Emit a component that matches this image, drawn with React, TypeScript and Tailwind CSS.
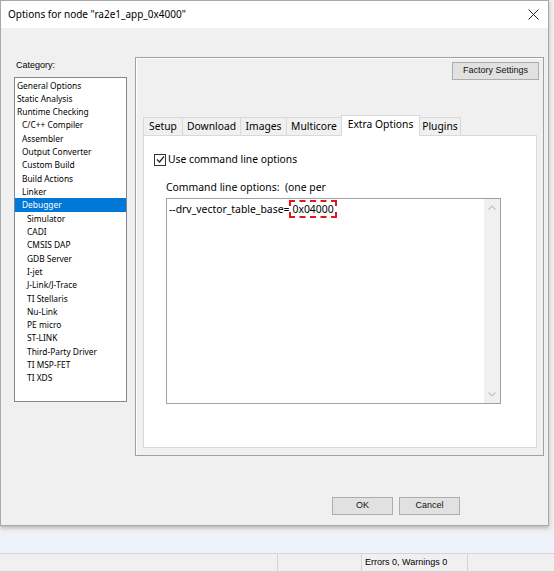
import { useState } from "react";

const categories: { label: string; level: number }[] = [
  { label: "General Options", level: 0 },
  { label: "Static Analysis", level: 0 },
  { label: "Runtime Checking", level: 0 },
  { label: "C/C++ Compiler", level: 1 },
  { label: "Assembler", level: 1 },
  { label: "Output Converter", level: 1 },
  { label: "Custom Build", level: 1 },
  { label: "Build Actions", level: 1 },
  { label: "Linker", level: 1 },
  { label: "Debugger", level: 1 },
  { label: "Simulator", level: 2 },
  { label: "CADI", level: 2 },
  { label: "CMSIS DAP", level: 2 },
  { label: "GDB Server", level: 2 },
  { label: "I-jet", level: 2 },
  { label: "J-Link/J-Trace", level: 2 },
  { label: "TI Stellaris", level: 2 },
  { label: "Nu-Link", level: 2 },
  { label: "PE micro", level: 2 },
  { label: "ST-LINK", level: 2 },
  { label: "Third-Party Driver", level: 2 },
  { label: "TI MSP-FET", level: 2 },
  { label: "TI XDS", level: 2 },
];

const tabs = [
  { label: "Setup", w: "w-[40px]" },
  { label: "Download", w: "w-[58px]" },
  { label: "Images", w: "w-[46px]" },
  { label: "Multicore", w: "w-[55px]" },
  { label: "Extra Options", w: "w-[79px]" },
  { label: "Plugins", w: "w-[41px]" },
];

const indent = ["pl-[2px]", "pl-[7px]", "pl-[12px]"];

function WinButton({ label, className }: { label: string; className: string }) {
  return (
    <button
      type="button"
      className={`flex items-center justify-center border border-[#adadad] bg-[#e1e1e1] text-[9px] text-[#111] font-['Liberation_Sans',sans-serif] ${className}`}
    >
      {label}
    </button>
  );
}

export default function App() {
  const [selected, setSelected] = useState("Debugger");
  const [activeTab, setActiveTab] = useState("Extra Options");
  const [useCmd, setUseCmd] = useState(true);

  return (
    <div className="relative h-[572px] w-[554px] overflow-hidden bg-[#f0f0f0] font-['Noto_Sans',sans-serif] text-[10px] text-black">
      {/* dialog window */}
      <div className="flex h-[526px] w-[549px] flex-col border border-[#a8a8a8] bg-[#f0f0f0] shadow-[0_2px_4px_rgba(0,0,0,0.25)]">
        <div className="flex h-[27px] shrink-0 items-center justify-between bg-white pl-[7px] pr-[8px]">
          <span className="text-[10px]">Options for node "ra2e1_app_0x4000"</span>
          <svg width="11" height="11" viewBox="0 0 11 11" className="mr-[1px]">
            <path d="M0.5 0.5 L10.5 10.5 M10.5 0.5 L0.5 10.5" stroke="#222" strokeWidth="1" />
          </svg>
        </div>

        <div className="flex pt-[29px]">
          {/* category list */}
          <div className="ml-[13px] w-[113px]">
            <div className="mt-[1px] h-[14px] pl-[2px] text-[9px] leading-[14px] font-['Liberation_Sans',sans-serif]">
              Category:
            </div>
            <div className="mt-[5px] h-[325px] border border-[#828790] bg-white pt-[0.5px]">
              {categories.map((c) => (
                <div
                  key={c.label}
                  onClick={() => setSelected(c.label)}
                  className={`h-[13.32px] text-[8.4px] leading-[13.32px] ${indent[c.level]} ${
                    selected === c.label ? "bg-[#0078d7] text-white" : ""
                  }`}
                >
                  {c.label}
                </div>
              ))}
            </div>
          </div>

          {/* options panel */}
          <div className="ml-[8px] flex h-[399px] w-[409px] flex-col border border-[#a0a0a0] shadow-[inset_1px_1px_0_#fff]">
            <div className="flex justify-end pr-[4px] pt-[4px]">
              <WinButton label="Factory Settings" className="h-[18px] w-[87px]" />
            </div>

            <div className="mt-[35px] flex h-[20px] items-end pl-[7px]">
              {tabs.map((t) => {
                const active = activeTab === t.label;
                return (
                  <div
                    key={t.label}
                    onClick={() => setActiveTab(t.label)}
                    className={`flex shrink-0 items-center justify-center border-t border-r border-[#d9d9d9] text-[10.3px] first:border-l ${t.w} ${
                      active
                        ? "relative top-[1px] z-10 -ml-[1px] h-[21px] border-l bg-white pb-[2px]"
                        : "h-[18px] bg-[#f0f0f0]"
                    }`}
                  >
                    {t.label}
                  </div>
                );
              })}
            </div>

            <div className="ml-[7px] mr-[6px] h-[313px] border border-[#d9d9d9] bg-white">
              <div className="ml-[10px] mt-[17px] flex h-[13px] items-center">
                <span
                  onClick={() => setUseCmd(!useCmd)}
                  className="flex h-[12px] w-[12px] items-center justify-center border border-[#333] bg-white"
                >
                  {useCmd && (
                    <svg width="9" height="9" viewBox="0 0 9 9">
                      <path d="M1 4.5 L3.5 7 L8 1.5" fill="none" stroke="#222" strokeWidth="1.2" />
                    </svg>
                  )}
                </span>
                <span className="ml-[2px] text-[10.3px] leading-[13px]">Use command line options</span>
              </div>

              <div className="ml-[22px] mt-[14px] h-[14px] text-[10.4px] leading-[14px]">
                Command line options:&nbsp;&nbsp;(one per
              </div>

              <div className="ml-[22px] mt-[4px] flex h-[206px] w-[335px] border border-[#a0a0a0] bg-white">
                <div className="flex-1 pl-[2px] pt-[1px] text-[10.4px] leading-[18px]">
                  --drv_vector_table_base=
                  <span className="inline-block h-[18px] border-2 border-dashed border-[#e8141b] px-[1px] leading-[14px]">
                    0x04000
                  </span>
                </div>
                <div className="flex w-[16px] flex-col justify-between bg-[#f0f0f0] py-[5px]">
                  <svg width="16" height="8" viewBox="0 0 16 8">
                    <path d="M4.5 5.5 L8 2 L11.5 5.5" fill="none" stroke="#c2c2c2" strokeWidth="1.2" />
                  </svg>
                  <svg width="16" height="8" viewBox="0 0 16 8">
                    <path d="M4.5 2.5 L8 6 L11.5 2.5" fill="none" stroke="#c2c2c2" strokeWidth="1.2" />
                  </svg>
                </div>
              </div>
            </div>
          </div>
        </div>

        <div className="mt-[41px] flex gap-[6px] pl-[331px]">
          <WinButton label="OK" className="h-[18px] w-[61px]" />
          <WinButton label="Cancel" className="h-[18px] w-[61px]" />
        </div>
      </div>

      {/* workspace strip and status bar behind the dialog */}
      <div className="mt-[8px] h-[19px] bg-[#eef2fb]" />
      <div className="flex h-[19px] border-y border-[#d4d4d4] bg-[#f0f0f0] text-[9px] font-['Liberation_Sans',sans-serif]">
        <div className="w-[278px] border-r border-[#d4d4d4]" />
        <div className="w-[84px] border-r border-[#d4d4d4]" />
        <div className="flex w-[106px] items-center border-r border-[#d4d4d4] pl-[3px]">Errors 0, Warnings 0</div>
        <div className="flex-1" />
      </div>
    </div>
  );
}
